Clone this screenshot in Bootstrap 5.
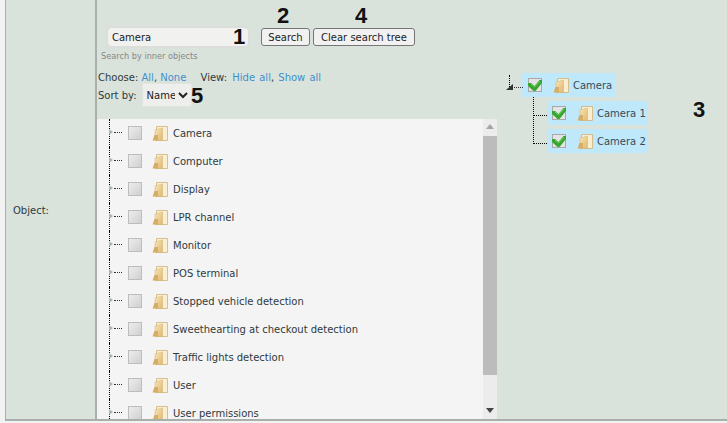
<!DOCTYPE html>
<html lang="en">
<head>
    <meta charset="UTF-8">
    <meta name="viewport" content="width=device-width, initial-scale=1.0">
    <title>Object search tree</title>
    <link href="https://cdn.jsdelivr.net/npm/bootstrap@5.3.3/dist/css/bootstrap.min.css" rel="stylesheet">
    <script src="https://cdn.jsdelivr.net/npm/bootstrap@5.3.3/dist/js/bootstrap.bundle.min.js"></script>
    <style>
        html, body { height: 423px; overflow: hidden; }
        body { background: #f1f2f1; font-family: "DejaVu Sans", sans-serif; font-size: 10px; color: #2f3a3c; }
        a { color: #3f8fce; text-decoration: none; }
        .form-frame { height: 421px; margin-left: 5px; background: #d9e3db; border-left: 1px solid #a9b0ac; border-bottom: 2px solid #a9b0ac; }
        .label-col { width: 91px; border-right: 2px solid #a9b0ac; padding: 2px 0 0 7px; }
        .content-col { width: 402px; }
        .search-row { height: 49px; padding: 26px 0 0 9px; }
        .search-box { width: 144px; height: 22px; background: #f1f1ef; border: 2px solid #dcdedb; border-radius: 6px; padding-left: 4px; color: #222; }
        .plain-btn { height: 18px; margin-top: 2px; background: #f1f1f1; border: 1px solid #767676; border-radius: 3px; color: #222; font-size: 10px; line-height: 15px; padding: 0; }
        .btn-search { width: 49px; margin-left: 11px; }
        .btn-clear { width: 102px; margin-left: 3px; }
        .hint { color: #888; font-size: 8.2px; padding-left: 4px; height: 21px; line-height: 14px; }
        .choose-row { height: 15px; padding-left: 1px; line-height: 15px; }
        .view-part { margin-left: 11px; }
        .view-links { margin-left: 2px; word-spacing: 1px; }
        .sort-row { height: 24px; padding-left: 1px; margin-top: -2px; }
        .sort-pick { width: 50px; height: 24px; margin-left: 5px; background: #eeeeec; border: 1px solid #e2e4e0; color: #222; font-size: 10px; font-family: inherit; }
        .list-pane { width: 400px; height: 300px; margin-top: 12px; background: #f4f4f4; overflow: hidden; }
        .list-rows { width: 386px; height: 300px; overflow: hidden; padding-left: 12px; }
        .obj-row { height: 28px; }
        .connector { position: relative; width: 19px; height: 28px; flex: none; border-left: 1px dotted #000; }
        .connector::before { content: ""; position: absolute; left: 4px; top: 13px; width: 8px; border-top: 1px dotted #333; }
        .connector::after { content: ""; position: absolute; left: -1px; top: 10px; border-left: 4px solid #aeb4b4; border-top: 3px solid transparent; border-bottom: 3px solid transparent; }
        .tick-icon { width: 14px; height: 14px; flex: none; }
        .folder-icon { width: 17px; height: 17px; flex: none; }
        .gap-box { margin-right: 10px; }
        .gap-folder { margin-right: 4px; }
        .gap-folder-tree { margin-right: 3px; }
        .scroll-col { width: 14px; height: 300px; background: #ececec; }
        .scroll-arrow { height: 17px; }
        .scroll-thumb { height: 239px; background: #bcbcbc; }
        .tree-pane { position: relative; color: #3a4a55; }
        .tree-root { position: relative; margin: 73px 0 4px 23px; width: 93px; height: 24px; background: #bfe8fb; padding-left: 6px; }
        .tree-child { position: relative; margin: 0 0 4px 48px; width: 101px; height: 24px; background: #bfe8fb; padding-left: 5px; }
        .gap-box-tree { margin-right: 11px; }
        .root-link { position: absolute; left: -13px; top: 2px; width: 13px; height: 12px; border-left: 1px dotted #000; }
        .root-link::before { content: ""; position: absolute; left: 4px; top: 12px; width: 9px; border-top: 1px dotted #333; }
        .root-link::after { content: ""; position: absolute; left: -4px; top: 9px; border-right: 7px solid #333; border-top: 6px solid transparent; }
        .child-link { position: absolute; left: -14px; top: -4px; width: 14px; height: 19px; border-left: 1px dotted #000; border-bottom: 1px dotted #000; }
        .child-link-tall { top: -24px; height: 39px; }
        .callout { position: absolute; font-family: "Liberation Sans", sans-serif; font-weight: 700; font-size: 22px; line-height: 22px; color: #111; }
        .c1 { left: 233px; top: 26px; }
        .c2 { left: 277px; top: 5px; }
        .c3 { left: 693px; top: 99px; }
        .c4 { left: 355px; top: 5px; }
        .c5 { left: 191px; top: 85px; }
    </style>
</head>
<body>

<svg width="0" height="0" class="position-absolute">
    <defs>
        <linearGradient id="boxFill" x1="0" y1="0" x2="1" y2="1">
            <stop offset="0" stop-color="#eeeeee"/>
            <stop offset="1" stop-color="#cfcfcf"/>
        </linearGradient>
        <linearGradient id="folderFill" x1="0" y1="0" x2="1" y2="1">
            <stop offset="0" stop-color="#f8e6b8"/>
            <stop offset="1" stop-color="#dfb76e"/>
        </linearGradient>
        <symbol id="i-box" viewBox="0 0 14 14">
            <rect x="0.5" y="0.5" width="13" height="13" fill="url(#boxFill)" stroke="#bdbdbd"/>
        </symbol>
        <symbol id="i-check" viewBox="0 0 14 14">
            <rect x="0.5" y="0.5" width="13" height="13" fill="#e4e4e4" stroke="#a8a8a8"/>
            <path d="M0 5 L3 5 L6.5 8 L11.5 2 L14 2 L14 5 L7.5 13 L5.5 13 L0 8 Z" fill="#38a52f"/>
            <path d="M3 6 L6.5 9 L12 3" fill="none" stroke="#6fd05f" stroke-width="1"/>
        </symbol>
        <symbol id="i-folder" viewBox="0 0 17 17">
            <path d="M4.5 1.5 H15.5 V15.5 H4.5 Z" fill="#f9eecf" stroke="#d2b27a" stroke-width="0.8"/>
            <path d="M3 5 L10.5 3 V15.5 H3 Z" fill="url(#folderFill)" stroke="#d2b27a" stroke-width="0.5"/>
            <path d="M0.5 15.5 L2.5 10 H6 V15.5 Z" fill="#d6ad66"/>
        </symbol>
    </defs>
</svg>

<div class="form-frame d-flex">
    <div class="label-col d-flex align-items-center"><span>Object:</span></div>

    <div class="content-col">
        <div class="search-row d-flex align-items-start">
            <div class="search-box d-flex align-items-center">Camera</div>
            <button type="button" class="plain-btn btn-search">Search</button>
            <button type="button" class="plain-btn btn-clear">Clear search tree</button>
        </div>
        <div class="hint">Search by inner objects</div>
        <div class="choose-row">Choose: <a href="#">All</a>, <a href="#">None</a> <span class="view-part">View:</span> <span class="view-links"><a href="#">Hide all</a>, <a href="#">Show all</a></span></div>
        <div class="sort-row d-flex align-items-center">
            <span>Sort by:</span>
            <select class="sort-pick"><option>Name</option></select>
        </div>
        <div class="list-pane d-flex">
            <div class="list-rows" id="objectList"></div>
            <div class="scroll-col d-flex flex-column">
                <svg class="scroll-arrow" viewBox="0 0 14 17"><path d="M7 5 L11 10 H3 Z" fill="#a5a5a5"/></svg>
                <div class="scroll-thumb"></div>
                <div class="flex-grow-1"></div>
                <svg class="scroll-arrow" viewBox="0 0 14 17"><path d="M3 6 H11 L7 11 Z" fill="#444"/></svg>
            </div>
        </div>
    </div>

    <div class="tree-pane flex-grow-1">
        <div class="tree-root d-flex align-items-center">
            <span class="root-link"></span>
            <svg class="tick-icon gap-box-tree"><use href="#i-check"/></svg>
            <svg class="folder-icon gap-folder-tree"><use href="#i-folder"/></svg>
            <span>Camera</span>
        </div>
        <div class="tree-child d-flex align-items-center">
            <span class="child-link"></span>
            <svg class="tick-icon gap-box-tree"><use href="#i-check"/></svg>
            <svg class="folder-icon gap-folder-tree"><use href="#i-folder"/></svg>
            <span>Camera 1</span>
        </div>
        <div class="tree-child d-flex align-items-center">
            <span class="child-link child-link-tall"></span>
            <svg class="tick-icon gap-box-tree"><use href="#i-check"/></svg>
            <svg class="folder-icon gap-folder-tree"><use href="#i-folder"/></svg>
            <span>Camera 2</span>
        </div>
    </div>
</div>

<span class="callout c1">1</span>
<span class="callout c2">2</span>
<span class="callout c3">3</span>
<span class="callout c4">4</span>
<span class="callout c5">5</span>

<script>
    const objects = ['Camera', 'Computer', 'Display', 'LPR channel', 'Monitor', 'POS terminal',
        'Stopped vehicle detection', 'Sweethearting at checkout detection', 'Traffic lights detection',
        'User', 'User permissions'];
    const list = document.getElementById('objectList');
    objects.forEach((name) => {
        const row = document.createElement('div');
        row.className = 'obj-row d-flex align-items-center';
        row.innerHTML = `<span class="connector"></span>
            <svg class="tick-icon gap-box"><use href="#i-box"/></svg>
            <svg class="folder-icon gap-folder"><use href="#i-folder"/></svg>
            <span>${name}</span>`;
        list.appendChild(row);
    });
</script>

</body>
</html>
